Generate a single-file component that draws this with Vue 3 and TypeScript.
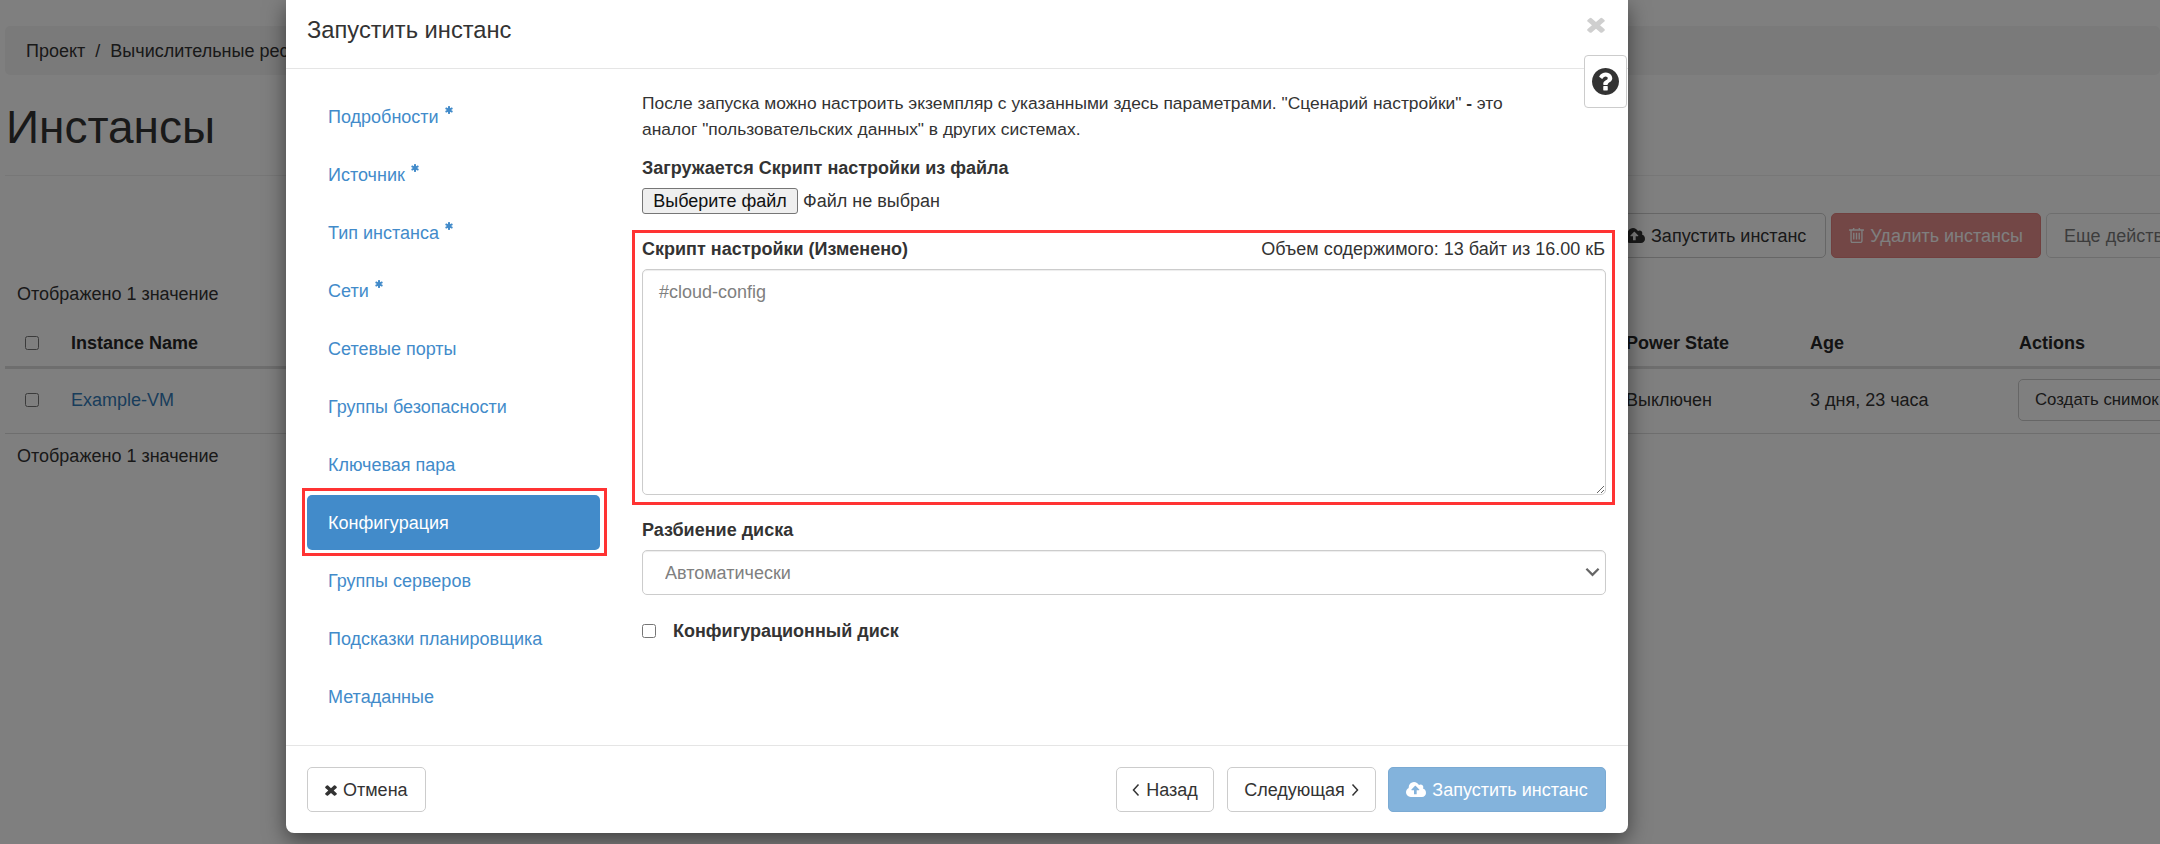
<script setup lang="ts">
interface NavItem { label: string; required?: boolean; active?: boolean }
const navItems: NavItem[] = [
  { label: 'Подробности', required: true },
  { label: 'Источник', required: true },
  { label: 'Тип инстанса', required: true },
  { label: 'Сети', required: true },
  { label: 'Сетевые порты' },
  { label: 'Группы безопасности' },
  { label: 'Ключевая пара' },
  { label: 'Конфигурация', active: true },
  { label: 'Группы серверов' },
  { label: 'Подсказки планировщика' },
  { label: 'Метаданные' },
]
const cloudPath = 'M1280 864q0-14-9-23L919 489q-9-9-23-9t-23 9L522 840q-10 12-10 24 0 14 9 23t23 9h224v352q0 13 9.5 22.5t22.5 9.5h192q13 0 22.5-9.5t9.5-22.5V896h224q13 0 22.5-9.5t9.5-22.5zm640 288q0 159-112.5 271.5T1536 1536H448q-185 0-316.5-131.5T0 1088q0-130 70-240t188-165q-2-30-2-43 0-212 150-362t362-150q156 0 285.5 87T1242 415q71-62 166-62 106 0 181 75t75 181q0 76-41 138 130 31 213.5 135.5T1920 1152z'
const timesPath = 'M1298 1322q0 40-28 68l-136 136q-28 28-68 28t-68-28l-294-294-294 294q-28 28-68 28t-68-28l-136-136q-28-28-28-68t28-68l294-294-294-294q-28-28-28-68t28-68l136-136q28-28 68-28t68 28l294 294 294-294q28-28 68-28t68 28l136 136q28 28 28 68t-28 68l-294 294 294 294q28 28 28 68z'
</script>

<template>
  <div class="root">
    <div class="page">
      <div class="crumbs"><span>Проект</span><span class="sep">/</span><span>Вычислительные ресурсы</span></div>
      <h1 class="title">Инстансы</h1>
      <div class="toolbar">
        <button class="btn launch" type="button">
          <svg class="ic-cloud" viewBox="0 128 1920 1408" preserveAspectRatio="none"><path fill-rule="evenodd" :d="cloudPath" /></svg>
          Запустить инстанс
        </button>
        <button class="btn danger" type="button">
          <svg class="ic-trash" viewBox="0 256 1408 1408" preserveAspectRatio="none"><path d="M512 736v576q0 14-9 23t-23 9h-64q-14 0-23-9t-9-23V736q0-14 9-23t23-9h64q14 0 23 9t9 23zm256 0v576q0 14-9 23t-23 9h-64q-14 0-23-9t-9-23V736q0-14 9-23t23-9h64q14 0 23 9t9 23zm256 0v576q0 14-9 23t-23 9h-64q-14 0-23-9t-9-23V736q0-14 9-23t23-9h64q14 0 23 9t9 23zm128 724V512H256v948q0 22 7 40.5t14.5 27 10.5 8.5h832q3 0 10.5-8.5t14.5-27 7-40.5zM480 384h448l-48-117q-7-9-17-11H546q-10 2-17 11zm928 32v64q0 14-9 23t-23 9h-96v948q0 83-47 143.5t-113 60.5H288q-66 0-113-58.5T128 1464V512H32q-14 0-23-9t-9-23v-64q0-14 9-23t23-9h309l70-167q15-37 54-63t79-26h320q40 0 79 26t54 63l70 167h309q14 0 23 9t9 23z" /></svg>
          Удалить инстансы
        </button>
        <button class="btn more" type="button">Еще действия</button>
      </div>
      <div class="count">Отображено 1 значение</div>
      <div class="table">
        <div class="row head">
          <div class="cell check"><input type="checkbox" /></div>
          <div class="cell">Instance Name</div>
          <div class="cell">Power State</div>
          <div class="cell">Age</div>
          <div class="cell">Actions</div>
        </div>
        <div class="row body-row">
          <div class="cell check"><input type="checkbox" /></div>
          <div class="cell"><a class="vm">Example-VM</a></div>
          <div class="cell">Выключен</div>
          <div class="cell">3 дня, 23 часа</div>
          <div class="cell"><button class="btn snap" type="button">Создать снимок</button></div>
        </div>
      </div>
      <div class="count bottom">Отображено 1 значение</div>
    </div>

    <div class="backdrop">
      <div class="modal">
        <header class="m-head">
          <span class="m-title">Запустить инстанс</span>
          <svg class="m-close" viewBox="100 220 1210 1350" preserveAspectRatio="none"><path :d="timesPath" /></svg>
          <button class="help" type="button" aria-label="help">
            <svg viewBox="0 128 1536 1536"><path d="M896 1376v-192q0-14-9-23t-23-9H672q-14 0-23 9t-9 23v192q0 14 9 23t23 9h192q14 0 23-9t9-23zm256-672q0-88-55.5-163T958 425t-170-41q-243 0-371 213-15 24 8 42l132 100q7 6 19 6 16 0 25-12 53-68 86-92 34-24 86-24 48 0 85.5 26t37.5 59q0 38-20 61t-68 45q-63 28-115.5 86.5T640 1020v36q0 14 9 23t23 9h192q14 0 23-9t9-23q0-19 21.5-49.5T972 957q32-18 49-28.5t46-35 44.5-48 28-60.5 12.5-81zm384 192q0 209-103 385.5T1153.5 1561 768 1664t-385.5-103T103 1281 0 896t103-385.5T382.5 231 768 128t385.5 103T1433 510.5 1536 896z" /></svg>
          </button>
        </header>

        <div class="m-body">
          <nav class="nav">
            <a v-for="item in navItems" :key="item.label" class="nav-item" :class="{ active: item.active }">
              <span>{{ item.label }}</span>
              <svg v-if="item.required" class="star" viewBox="180 128 1430 1536"><path d="M1546 1050q46 26 59.5 77.5T1593 1225l-64 110q-26 46-77.5 59.5T1354 1382l-266-153v307q0 52-38 90t-90 38H832q-52 0-90-38t-38-90v-307l-266 153q-46 26-97.5 12.5T263 1335l-64-110q-26-46-12.5-97.5T246 1050l266-154-266-154q-46-26-59.5-77.5T199 567l64-110q26-46 77.5-59.5T438 410l266 153V256q0-52 38-90t90-38h128q52 0 90 38t38 90v307l266-153q46-26 97.5-12.5T1529 457l64 110q26 46 12.5 97.5T1546 742l-266 154z" /></svg>
            </a>
          </nav>

          <section class="form">
            <p class="help-text">После запуска можно настроить экземпляр с указанными здесь параметрами. "Сценарий настройки" <b>-</b> это<br />аналог "пользовательских данных" в других системах.</p>
            <div class="label upload-label">Загружается Скрипт настройки из файла</div>
            <div class="file-row">
              <button class="file-btn" type="button">Выберите файл</button>
              <span>Файл не выбран</span>
            </div>

            <div class="script">
              <div class="script-head">
                <span class="label">Скрипт настройки (Изменено)</span>
                <span>Объем содержимого: 13 байт из 16.00 кБ</span>
              </div>
              <textarea class="area">#cloud-config</textarea>
            </div>

            <div class="label disk-label">Разбиение диска</div>
            <div class="select-wrap">
              <select class="select"><option>Автоматически</option></select>
              <svg class="chev" viewBox="0 0 16 10"><polyline points="1.5,1.5 8,8 14.5,1.5" /></svg>
            </div>

            <label class="cfg">
              <input type="checkbox" />
              <span class="label">Конфигурационный диск</span>
            </label>
          </section>
        </div>

        <footer class="m-foot">
          <button class="btn foot cancel" type="button">
            <svg class="ic-x" viewBox="100 220 1210 1350" preserveAspectRatio="none"><path :d="timesPath" /></svg>
            Отмена
          </button>
          <div class="foot-right">
            <button class="btn foot back" type="button">
              <svg class="ang" viewBox="0 0 8 14"><polyline points="6.5,1.5 1.5,7 6.5,12.5" /></svg>
              Назад
            </button>
            <button class="btn foot next" type="button">
              Следующая
              <svg class="ang" viewBox="0 0 8 14"><polyline points="1.5,1.5 6.5,7 1.5,12.5" /></svg>
            </button>
            <button class="btn foot primary" type="button">
              <svg class="ic-cloud" viewBox="0 128 1920 1408" preserveAspectRatio="none"><path fill-rule="evenodd" :d="cloudPath" /></svg>
              Запустить инстанс
            </button>
          </div>
        </footer>
      </div>
    </div>
  </div>
</template>

<style>
html, body { margin: 0; overflow: hidden; background: #fff; }
</style>

<style scoped>
* { box-sizing: border-box; }
.root {
  position: relative;
  width: 2160px;
  height: 844px;
  overflow: hidden;
  font: 18px/26px "Liberation Sans", Arial, sans-serif;
  color: #333;
}
.page { width: 2160px; padding: 26px 0 0 5px; white-space: nowrap; }
.crumbs {
  height: 49px;
  background: #f5f5f5;
  border-radius: 5px;
  padding-left: 21px;
  display: flex;
  align-items: center;
  gap: 10px;
}
.title {
  margin: 0;
  height: 101px;
  border-bottom: 1px solid #eee;
  font-size: 46px;
  font-weight: 400;
  line-height: 72px;
  padding: 16px 0 0 1px;
}
.toolbar { display: flex; gap: 5px; padding: 37px 0 0 1602px; height: 105px; }
.btn {
  font: inherit;
  height: 45px;
  border: 1px solid #ccc;
  border-radius: 5px;
  background: #fff;
  color: #333;
  padding: 0 17px;
  display: inline-flex;
  align-items: center;
  gap: 6px;
  white-space: nowrap;
}
.launch { padding-right: 19px; }
.ic-cloud { width: 20px; height: 15px; fill: currentColor; flex: none; }
.ic-trash { width: 15px; height: 15px; fill: currentColor; flex: none; }
.ic-x { width: 12px; height: 12px; fill: currentColor; flex: none; }
.danger { background: #d9534f; border-color: #d43f3a; color: #fff; opacity: .65; }
.more { opacity: .65; width: 200px; justify-content: flex-start; }
.count { margin-left: 12px; height: 26px; line-height: 26px; }
.table { margin-top: 10px; }
.row {
  display: grid;
  grid-template-columns: 66px 1555px 184px 209px 1fr;
  align-items: center;
}
.head { height: 52px; border-bottom: 3px solid #ddd; font-weight: 700; color: #262626; padding-top: 2px; }
.body-row { height: 65px; border-bottom: 1px solid #ddd; padding-bottom: 2px; }
.check { padding-left: 20px; display: flex; }
.check input { margin: 0; width: 14px; height: 14px; }
.vm { color: #337ab7; }
.snap { width: 200px; margin-left: -1px; justify-content: flex-start; padding-left: 16px; height: 42px; font-size: 16.8px; }
.count.bottom { margin-top: 9px; }

.backdrop { position: absolute; inset: 0; background: rgba(0, 0, 0, .5); }
.modal {
  width: 1342px;
  height: 833px;
  margin-left: 286px;
  background: #fff;
  border-radius: 0 0 8px 8px;
  box-shadow: 0 7px 21px rgba(0, 0, 0, .5);
  display: flex;
  flex-direction: column;
}
.m-head {
  position: relative;
  height: 69px;
  flex: none;
  border-bottom: 1px solid #e5e5e5;
  padding: 17px 0 0 21px;
}
.m-title { font-size: 23.7px; line-height: 26px; }
.m-close { position: absolute; left: 1301px; top: 16px; width: 18px; height: 17px; fill: #cfcfcf; }
.help {
  position: absolute;
  left: 1298px;
  top: 55px;
  width: 43px;
  height: 53px;
  background: #fff;
  border: 1px solid #ccc;
  border-radius: 4px;
  padding: 0;
  display: flex;
  align-items: center;
  justify-content: center;
}
.help svg { width: 27px; height: 27px; fill: #333; }

.m-body { height: 676px; flex: none; display: flex; padding: 20px 22px 0 21px; }
.nav { width: 335px; flex: none; display: flex; flex-direction: column; gap: 3px; }
.nav-item {
  position: relative;
  width: 293px;
  height: 55px;
  padding-left: 21px;
  border-radius: 5px;
  color: #428bca;
  display: flex;
  align-items: center;
  gap: 6px;
  flex: none;
}
.nav-item.active { background: #428bca; color: #fff; }
.nav-item.active::after {
  content: "";
  position: absolute;
  inset: -7px -7px -6px -5px;
  border: 3px solid #ff3333;
  pointer-events: none;
}
.star { width: 8px; height: 8px; fill: currentColor; margin-top: -13px; }

.form { flex: 1; min-width: 0; }
.help-text { margin: 1px 0 0; font-size: 17.4px; }
.label { font-weight: 700; }
.upload-label { margin-top: 13px; }
.file-row { display: flex; align-items: center; gap: 5px; margin-top: 7px; height: 26px; }
.file-btn {
  width: 156px;
  height: 26px;
  font: inherit;
  line-height: 1;
  color: #111;
  background: #efefef;
  border: 1px solid #767676;
  border-radius: 3px;
  padding: 0;
}
.script { position: relative; margin-top: 22px; }
.script::after {
  content: "";
  position: absolute;
  inset: -6px -9px -10px -10px;
  border: 3px solid #ff3333;
  pointer-events: none;
}
.script-head { display: flex; justify-content: space-between; height: 26px; padding-right: 1px; }
.area {
  display: block;
  width: 100%;
  height: 226px;
  margin-top: 7px;
  border: 1px solid #ccc;
  border-radius: 5px;
  padding: 9px 16px;
  font: inherit;
  color: #808080;
  box-shadow: inset 0 1px 1px rgba(0, 0, 0, .075);
  resize: vertical;
  outline: none;
}
.disk-label { margin-top: 22px; }
.select-wrap { position: relative; margin-top: 7px; }
.select {
  display: block;
  width: 100%;
  height: 45px;
  border: 1px solid #ccc;
  border-radius: 5px;
  background: #fff;
  appearance: none;
  padding: 0 22px;
  font: inherit;
  color: #808080;
  box-shadow: inset 0 1px 1px rgba(0, 0, 0, .075);
}
.chev { position: absolute; right: 6px; top: 17px; width: 15px; height: 10px; }
.chev polyline { fill: none; stroke: #666; stroke-width: 2.4; }
.cfg { display: flex; align-items: center; gap: 17px; margin-top: 23px; height: 26px; }
.cfg input { margin: 0; width: 14px; height: 14px; }

.m-foot {
  flex: 1;
  border-top: 1px solid #e5e5e5;
  padding: 21px 22px 0 21px;
  display: flex;
  justify-content: space-between;
  align-items: flex-start;
}
.foot-right { display: flex; gap: 13px; }
.foot { padding: 0 17px; }
.cancel { width: 119px; }
.back { width: 98px; padding: 0; justify-content: center; }
.next { width: 149px; padding: 0; justify-content: center; }
.foot.primary { width: 218px; margin-left: -1px; padding: 0; justify-content: center; background: #428bca; border-color: #357ebd; color: #fff; opacity: .65; }
.ang { width: 8px; height: 14px; flex: none; }
.ang polyline { fill: none; stroke: #333; stroke-width: 1.5; }
</style>
